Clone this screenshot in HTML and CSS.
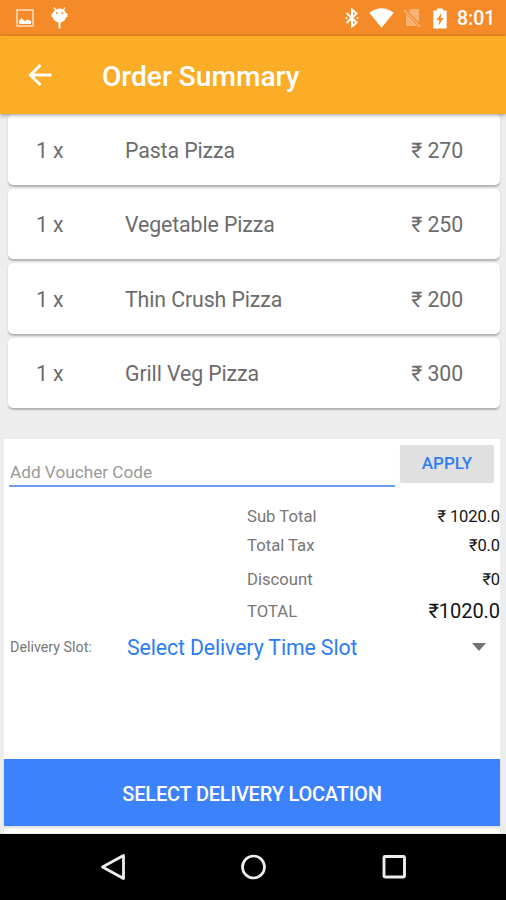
FILE: index.html
```html
<!DOCTYPE html>
<html lang="en">
<head>
<meta charset="utf-8">
<title>Order Summary</title>
<link rel="stylesheet" href="styles.css">
</head>
<body>
<div class="screen">
  <div class="status">
    <svg class="i-picture" width="18" height="18" viewBox="0 0 18 18"><rect x="1" y="1" width="16" height="16" fill="none" stroke="#fff" stroke-width="1.500" opacity=".75"/><path d="M3 15v-3.500l2.500-2.500 3 3 3-1.500 3.500 1.500v3z" fill="#fff"/></svg>
    <svg class="i-robot" width="17" height="22" viewBox="0 0 17 22"><path d="M3 .5l2 3M14 .5l-2 3" stroke="#fff" stroke-width="1.300"/><ellipse cx="8.500" cy="8.500" rx="7" ry="7" fill="#fff"/><path d="M.5 6.500h16v3.500H.5z" fill="#fff"/><path d="M8.500 14v7.500" stroke="#fff" stroke-width="2"/><circle cx="5.700" cy="6" r=".9" fill="#f58a28"/><circle cx="11.300" cy="6" r=".9" fill="#f58a28"/></svg>
    <svg class="i-bluetooth" width="14" height="20" viewBox="0 0 14 20"><path d="M1.500 5l10 9.500L7 18.500v-17l4.500 4-10 9.500" fill="none" stroke="#fff" stroke-width="2"/><circle cx="1.500" cy="10" r="1.100" fill="#fff"/><circle cx="12.500" cy="10" r="1.100" fill="#fff"/></svg>
    <svg class="i-wifi" width="25" height="20" viewBox="0 0 25 20"><path d="M0.300 4.800Q12.500-4.200 24.700 4.800L12.500 19.800z" fill="#fff"/></svg>
    <svg class="i-sim" width="19" height="20" viewBox="0 0 19 20"><path d="M7 1h9v13.500L5.500 4zM3 6l11.500 12H3z" fill="#fff"/><path d="M1 2l16.500 17" stroke="#fff" stroke-width="1.600"/></svg>
    <svg class="i-battery" width="14" height="21" viewBox="0 0 14 21"><path d="M1 2.500h3V.5h6v2h3q.7 0 .7.700v16.600q0 .7-.7.700H1q-.7 0-.7-.7V3.200q0-.7.700-.7z" fill="#fff"/><path d="M8.500 5L3.300 12.200h3L5.500 17.500l5.200-7.500h-3z" fill="#f58a28"/></svg>
    <span class="clock">8:01</span>
  </div>
  <header class="appbar">
    <svg class="back" width="24" height="24" viewBox="0 0 24 24"><path d="M23.500 12H3M12.500 2L2.500 12l10 10" fill="none" stroke="#fff" stroke-width="2.900"/></svg>
    <h1>Order Summary</h1>
  </header>
  <main class="content">
    <ul class="items">
      <li class="item"><span class="qty">1 x</span><span class="name">Pasta Pizza</span><span class="price">₹ 270</span></li>
      <li class="item"><span class="qty">1 x</span><span class="name">Vegetable Pizza</span><span class="price">₹ 250</span></li>
      <li class="item"><span class="qty">1 x</span><span class="name">Thin Crush Pizza</span><span class="price">₹ 200</span></li>
      <li class="item"><span class="qty">1 x</span><span class="name">Grill Veg Pizza</span><span class="price">₹ 300</span></li>
    </ul>
    <section class="panel">
      <div class="voucher">
        <div class="field"><span>Add Voucher Code</span></div>
        <div class="apply">APPLY</div>
      </div>
      <div class="totals">
        <div class="row"><span>Sub Total</span><b>₹ 1020.0</b></div>
        <div class="row tax"><span>Total Tax</span><b>₹0.0</b></div>
        <div class="row discount"><span>Discount</span><b>₹0</b></div>
        <div class="row total"><span>TOTAL</span><b>₹1020.0</b></div>
      </div>
      <div class="slot">
        <span class="slot-label">Delivery Slot:</span>
        <span class="slot-value">Select Delivery Time Slot</span>
        <svg width="14" height="8" viewBox="0 0 14 8"><path d="M0 0h14L7 8z" fill="#737373"/></svg>
      </div>
      <div class="cta"><span>SELECT DELIVERY LOCATION</span></div>
    </section>
  </main>
  <nav class="nav">
    <svg width="26" height="28" viewBox="0 0 26 28"><path d="M23.500 2.500v23L2.500 14z" fill="none" stroke="#eee" stroke-width="2.800" stroke-linejoin="round"/></svg>
    <svg width="26" height="28" viewBox="0 0 26 28"><circle cx="13.500" cy="14" r="11" fill="none" stroke="#eee" stroke-width="2.700"/></svg>
    <svg width="26" height="28" viewBox="0 0 26 28"><rect x="3" y="3.500" width="20.500" height="20.500" rx="1" fill="none" stroke="#eee" stroke-width="2.900"/></svg>
  </nav>
</div>
</body>
</html>
```
FILE: styles.css
```css
* { box-sizing: border-box; }
body { margin: 0; font-family: Roboto, "Noto Sans", sans-serif; }
svg { display: block; flex: none; }
span, b { white-space: nowrap; }
.screen { width: 506px; height: 900px; display: flex; flex-direction: column; overflow: hidden; background: #ededed; }
.status { height: 36px; flex: none; display: flex; align-items: center; padding: 0 11px 0 16px; background: #f58a28; color: #fff; }
.i-robot { margin-left: 17px; }
.i-bluetooth { margin-left: auto; }
.i-wifi { margin-left: 10px; }
.i-sim { margin-left: 9px; opacity: .35; }
.i-battery { margin-left: 11px; }
.clock { width: 38px; margin-left: 10px; font-size: 19.5px; font-weight: 500; line-height: 36px; padding-top: 2px; }
.appbar { height: 78px; flex: none; display: flex; align-items: center; padding: 4px 0 0 28px; background: #fbad27; color: #fff; box-shadow: 0 1px 4px rgba(0, 0, 0, .4); z-index: 1; }
.back { margin-top: -4px; }
h1 { margin: 0 0 0 50px; font-size: 28.1px; font-weight: 500; line-height: 34px; }
.content { flex: 1; display: flex; flex-direction: column; }
.items { list-style: none; margin: 0; padding: 0 6px 0 8px; display: flex; flex-direction: column; gap: 4px; }
.item { height: 70.5px; display: flex; align-items: center; padding: 2px 37px 0 28px; border-radius: 5px; background: #fff; box-shadow: 0 1.5px 1.5px rgba(0, 0, 0, .24); font-size: 21.3px; letter-spacing: -.1px; color: #6c6c6c; }
.qty { width: 89px; }
.price { margin-left: auto; }
.panel { margin: 31px 6px 0 4px; height: 394px; display: flex; flex-direction: column; background: #fff; }
.voucher { display: flex; height: 48px; padding-left: 5px; }
.field { width: 386px; border-bottom: 2px solid #6b9cf5; padding: 22px 0 0 1px; font-size: 17.2px; line-height: 22px; color: #999; }
.apply { width: 94px; height: 37px; margin: 6px 0 0 5px; border-radius: 2px; background: #e0e0e0; box-shadow: 0 1px 1px rgba(0, 0, 0, .15); color: #2f7df0; font-size: 17px; font-weight: 500; line-height: 37px; text-align: center; }
.totals { padding: 18px 0 0 243px; }
.row { display: flex; justify-content: space-between; align-items: center; height: 22px; font-size: 16.7px; color: #777; }
.row b { font-weight: 400; font-size: 16.5px; letter-spacing: -.1px; color: #151515; }
.tax { margin-top: 7px; }
.discount { margin-top: 12px; }
.total { margin-top: 10px; }
.total b { font-size: 20.1px; }
.slot { display: flex; align-items: center; height: 30px; margin-top: 10px; padding: 0 14px 0 6px; }
.slot-label { width: 117px; font-size: 14.3px; color: #777; }
.slot-value { flex: 1; font-size: 21.3px; letter-spacing: -.12px; color: #2b7cf5; }
.cta { height: 67px; margin-top: auto; margin-bottom: 7px; display: flex; align-items: center; justify-content: center; background: #3d82fd; color: #fff; font-size: 20px; letter-spacing: -.2px; font-weight: 500; padding-top: 2px; box-shadow: 0 2px 2px rgba(0, 0, 0, .15); }
.nav { height: 66.5px; flex: none; display: flex; justify-content: center; gap: 114.5px; padding: 19px 0 0; background: #000; }
```
